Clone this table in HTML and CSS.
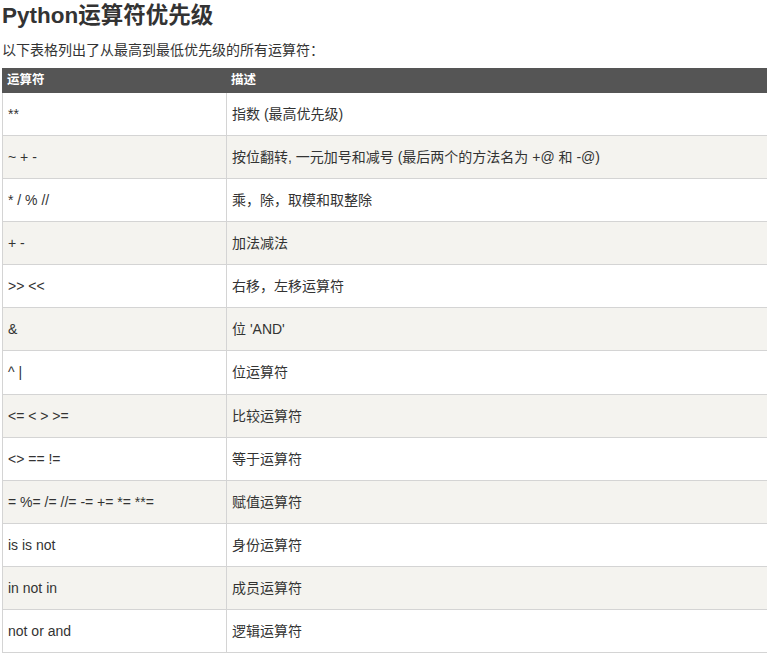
FILE: index.html
```html
<!DOCTYPE html>
<html lang="zh-CN">
<head>
<meta charset="utf-8">
<title>Python运算符优先级</title>
<link rel="stylesheet" href="styles.css">
</head>
<body>
<div class="page">
  <h2 class="title">Python运算符优先级</h2>
  <p class="intro">以下表格列出了从最高到最低优先级的所有运算符：</p>
  <table class="reference">
    <colgroup><col class="c1"><col class="c2"></colgroup>
    <tr><th>运算符</th><th>描述</th></tr>
    <tr><td>**</td><td>指数 (最高优先级)</td></tr>
    <tr><td>~ + -</td><td>按位翻转, 一元加号和减号 (最后两个的方法名为 +@ 和 -@)</td></tr>
    <tr><td>* / % //</td><td>乘，除，取模和取整除</td></tr>
    <tr><td>+ -</td><td>加法减法</td></tr>
    <tr><td>&gt;&gt; &lt;&lt;</td><td>右移，左移运算符</td></tr>
    <tr><td>&amp;</td><td>位 'AND'</td></tr>
    <tr><td>^ |</td><td>位运算符</td></tr>
    <tr><td>&lt;= &lt; &gt; &gt;=</td><td>比较运算符</td></tr>
    <tr><td>&lt;&gt; == !=</td><td>等于运算符</td></tr>
    <tr><td>= %= /= //= -= += *= **=</td><td>赋值运算符</td></tr>
    <tr><td>is is not</td><td>身份运算符</td></tr>
    <tr><td>in not in</td><td>成员运算符</td></tr>
    <tr><td>not or and</td><td>逻辑运算符</td></tr>
  </table>
</div>
</body>
</html>
```
FILE: styles.css
```css
html, body {
  margin: 0;
  padding: 0;
  background: #fff;
  overflow: hidden;
}
body {
  font-family: "Liberation Sans", "Noto Sans CJK SC", sans-serif;
  color: #333;
}
.page {
  padding-left: 2px;
  width: 780px;
}
.title {
  margin: 0;
  padding-top: 2px;
  font-size: 22.5px;
  line-height: 28px;
  font-weight: bold;
  color: #333;
}
.intro {
  margin: 10px 0 0 0;
  font-size: 14px;
  line-height: 20px;
}
table.reference {
  border-collapse: collapse;
  table-layout: fixed;
  width: 770px;
  margin-top: 8px;
  background: #fff;
  border: 1px solid #d4d4d4;
}
col.c1 { width: 224px; }
table.reference th {
  background: #555;
  color: #fff;
  border: 1px solid #555;
  font-size: 12.5px;
  line-height: 17px;
  padding: 3px 4px;
  text-align: left;
  font-weight: bold;
}
table.reference td {
  font-size: 14px;
  line-height: 28.08px;
  padding: 7px 5px;
  border: 1px solid #d4d4d4;
  vertical-align: top;
  white-space: nowrap;
}
table.reference tr:nth-child(odd) td {
  background: #f4f3ef;
}
```
